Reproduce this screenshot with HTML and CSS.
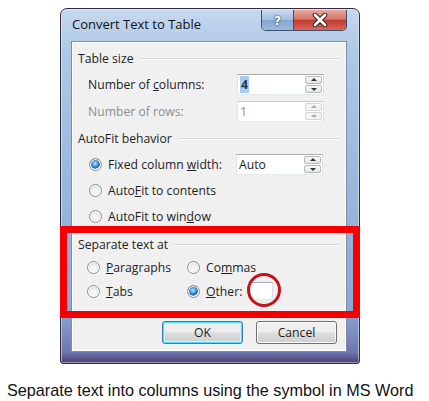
FILE: index.html
```html
<!DOCTYPE html>
<html lang="en">
  <head>
    <meta charset="UTF-8" />
    <meta name="viewport" content="width=device-width, initial-scale=1.0" />
    <title>Convert Text to Table</title>
    <link rel="stylesheet" href="styles.css">
  </head>
  <body>
    <div class="window">
      <div class="titlebar">
        <span class="title">Convert Text to Table</span>
        <div class="caption-buttons">
          <span class="cap-btn help">?</span>
          <span class="cap-btn close">
            <svg width="16" height="14" viewBox="0 0 16 14">
              <path d="M3 2 L13 12 M13 2 L3 12" stroke="#3a1c1c" stroke-width="4.6" stroke-linecap="round" />
              <path d="M3 2 L13 12 M13 2 L3 12" stroke="#fff" stroke-width="2.8" stroke-linecap="round" />
            </svg>
          </span>
        </div>
      </div>

      <div class="panel">
        <!-- Table size -->
        <div class="group-head">Table size</div>
        <div class="field-row">
          <span class="field-label">Number of <u>c</u>olumns:</span>
          <div class="spin">
            <span class="value"><span class="selected">4</span></span>
            <span class="arrows">
              <span class="arrow up"></span>
              <span class="arrow down"></span>
            </span>
          </div>
        </div>
        <div class="field-row disabled">
          <span class="field-label">Number of rows:</span>
          <div class="spin">
            <span class="value">1</span>
            <span class="arrows">
              <span class="arrow up"></span>
              <span class="arrow down"></span>
            </span>
          </div>
        </div>

        <!-- AutoFit behavior -->
        <div class="group-head second">AutoFit behavior</div>
        <div class="radio-row first">
          <span class="radio-label"><span class="radio checked"></span><span>Fixed column <u>w</u>idth:</span></span>
          <div class="spin">
            <span class="value">Auto</span>
            <span class="arrows">
              <span class="arrow up"></span>
              <span class="arrow down"></span>
            </span>
          </div>
        </div>
        <div class="radio-row">
          <span class="radio-label"><span class="radio"></span><span>Auto<u>F</u>it to contents</span></span>
        </div>
        <div class="radio-row">
          <span class="radio-label"><span class="radio"></span><span>AutoFit to win<u>d</u>ow</span></span>
        </div>

        <!-- Separate text at -->
        <div class="group-head third">Separate text at</div>
        <div class="sep-row first">
          <span class="sep-col"><span class="radio"></span><span><u>P</u>aragraphs</span></span>
          <span class="sep-col"><span class="radio"></span><span>Co<u>m</u>mas</span></span>
        </div>
        <div class="sep-row">
          <span class="sep-col"><span class="radio"></span><span><u>T</u>abs</span></span>
          <span class="sep-col"><span class="radio checked"></span><span><u>O</u>ther:</span>
            <span class="other-box"><span class="mark-circle"></span></span>
          </span>
        </div>

        <div class="buttons">
          <span class="btn default">OK</span>
          <span class="btn">Cancel</span>
        </div>
      </div>

      <div class="highlight-box"></div>
    </div>

    <p class="caption">Separate text into columns using the symbol in MS Word</p>
  </body>
</html>
```

FILE: styles.css
```css
body {
  margin: 0;
  background: #fff;
  width: 429px;
  height: 401px;
  overflow: hidden;
}

.window {
  position: relative;
  box-sizing: border-box;
  width: 300px;
  height: 356px;
  margin: 8px 0 0 60px;
  padding: 0 12px 11px 10px;
  display: flex;
  flex-direction: column;
  border: 1px solid #2e2a44;
  border-radius: 7px 7px 3px 3px;
  background: linear-gradient(to bottom, #c6d9ee 0%, #aec8e6 12%, #9bb9df 45%, #8ca8d6 85%, #6f74ae 97%, #4a3f72 100%);
  box-shadow: inset 0 0 0 1px rgba(255, 255, 255, 0.45);
}

.titlebar {
  height: 32px;
  display: flex;
  justify-content: space-between;
  align-items: flex-start;
}

.title {
  margin: 6px 0 0 1px;
  font-family: 'Open Sans', 'Noto Sans', sans-serif;
  font-size: 13px;
  line-height: 18px;
  color: #111;
}

.caption-buttons {
  display: flex;
  margin-top: 1px;
  height: 20px;
  border: 1px solid #3d4f6e;
  border-top: none;
  border-radius: 0 0 5px 5px;
  overflow: hidden;
}

.cap-btn {
  display: flex;
  align-items: center;
  justify-content: center;
  height: 20px;
}

.help {
  width: 31px;
  background: linear-gradient(to bottom, #c9daee 0%, #a5bfdf 48%, #86a6d2 52%, #9cb8de 100%);
  border-right: 1px solid #3d4f6e;
  font-family: 'DejaVu Sans', sans-serif;
  font-weight: bold;
  font-size: 13px;
  color: #fff;
  text-shadow: 0 0 2px #233a5e, 0 0 1px #233a5e;
}

.close {
  width: 52px;
  background: linear-gradient(to bottom, #e8a89c 0%, #d6776a 45%, #c43c2c 52%, #d8665a 100%);
}

.panel {
  box-sizing: border-box;
  flex: 1;
  padding: 7px 7px 0 6px;
  background: #f0f0f0;
  border: 1px solid #7e8ca6;
  box-shadow: inset 0 0 0 1px #fff;
  font-family: 'Open Sans', 'Noto Sans', sans-serif;
  font-size: 12.2px;
  color: #1e1e1e;
}

.group-head {
  display: flex;
  align-items: center;
  height: 18px;
  gap: 6px;
  white-space: nowrap;
}

.group-head::after {
  content: "";
  flex: 1;
  height: 1px;
  background: #d7d7d7;
  box-shadow: 0 1px 0 #fff;
}

.group-head.second {
  margin-top: 4px;
}

.group-head.third {
  margin-top: 6px;
}

.field-row,
.radio-row,
.sep-row {
  display: flex;
  align-items: center;
}

.field-row {
  height: 27px;
  margin-left: 10px;
}

.group-head + .field-row {
  margin-top: 4px;
}

.field-label {
  width: 149px;
}

.disabled {
  color: #8e8e8e;
}

.spin {
  box-sizing: border-box;
  display: flex;
  width: 87px;
  height: 21px;
  background: #fff;
  border: 1px solid #abadb3;
  border-color: #abadb3 #dbdfe6 #e3e9ef #e2e3ea;
}

.disabled .spin {
  border-color: #c8cbd0 #dfe2e6 #e6e9ee #e4e5ea;
}

.value {
  flex: 1;
  padding-left: 2px;
  line-height: 19px;
}

.selected {
  background: #a9cdf2;
  color: #1d3658;
  padding: 0 1px;
  font-weight: bold;
}

.arrows {
  display: flex;
  flex-direction: column;
  gap: 1px;
  width: 17px;
  padding: 1px 1px 1px 0;
}

.arrow {
  flex: 1;
  position: relative;
  background: linear-gradient(to bottom, #f8f8f8, #e4e4e4);
  border: 1px solid #b9b9b9;
  border-radius: 2px;
}

.disabled .arrow {
  border-color: #d4d4d4;
  background: #f4f4f4;
}

.arrow::after {
  content: "";
  position: absolute;
  left: 50%;
  top: 50%;
  margin: -2px 0 0 -3px;
  border-left: 3px solid transparent;
  border-right: 3px solid transparent;
}

.arrow.up::after {
  border-bottom: 3px solid #333;
}

.arrow.down::after {
  border-top: 3px solid #333;
  margin-top: -1px;
}

.disabled .arrow::after {
  border-bottom-color: #aaa;
  border-top-color: #aaa;
}

.radio {
  box-sizing: border-box;
  display: inline-block;
  flex: none;
  width: 13px;
  height: 13px;
  margin-right: 6px;
  border: 1px solid #8f8f8f;
  border-radius: 50%;
  background: radial-gradient(circle at 50% 60%, #f4f4f4 30%, #dadada 75%, #cfcfcf 100%);
  box-shadow: inset 0 0 0 1px #fff;
}

.radio.checked {
  background: radial-gradient(circle at 45% 40%, #bfe2ff 0%, #3d8fd6 35%, #1e5ea6 55%, #f4f4f4 62%, #e0e0e0 100%);
}

.radio-row {
  height: 26px;
  margin-left: 11px;
}

.radio-row.first {
  margin-top: 4px;
}

.radio-label {
  display: flex;
  align-items: center;
  width: 147px;
  white-space: nowrap;
}

.sep-row {
  height: 24px;
  margin-left: 9px;
}

.sep-row.first {
  margin-top: 2px;
}

.sep-col {
  display: flex;
  align-items: center;
  width: 100px;
  white-space: nowrap;
}

.other-box {
  position: relative;
  box-sizing: border-box;
  flex: none;
  width: 23px;
  height: 18px;
  margin-left: 8px;
  background: #fff;
  border: 1px solid #abadb3;
  border-color: #abadb3 #dbdfe6 #e3e9ef #e2e3ea;
}

.mark-circle {
  position: absolute;
  left: -4px;
  top: -10px;
  width: 28px;
  height: 28px;
  border: 3px solid #c4121c;
  border-radius: 50%;
}

.buttons {
  display: flex;
  justify-content: flex-end;
  gap: 13px;
  margin: 18px 2px 0 0;
}

.btn {
  box-sizing: border-box;
  display: flex;
  align-items: center;
  justify-content: center;
  width: 81px;
  height: 23px;
  border: 1px solid #707070;
  border-radius: 3px;
  background: linear-gradient(to bottom, #f2f2f2 0%, #ebebeb 48%, #dddddd 52%, #cfcfcf 100%);
  box-shadow: inset 0 0 0 1px #fcfcfc;
}

.btn.default {
  border-color: #3c7fb1;
  box-shadow: inset 0 0 0 1px #48d8fb, inset 0 0 0 2px #d6f2fc;
}

.highlight-box {
  position: absolute;
  left: -1px;
  top: 217px;
  box-sizing: border-box;
  width: 300px;
  height: 92px;
  border: 7px solid #f40000;
}

.caption {
  margin: 17px 0 0 7px;
  font-family: 'Liberation Sans', Arial, sans-serif;
  font-size: 16.2px;
  line-height: 18px;
  color: #111;
}
```
